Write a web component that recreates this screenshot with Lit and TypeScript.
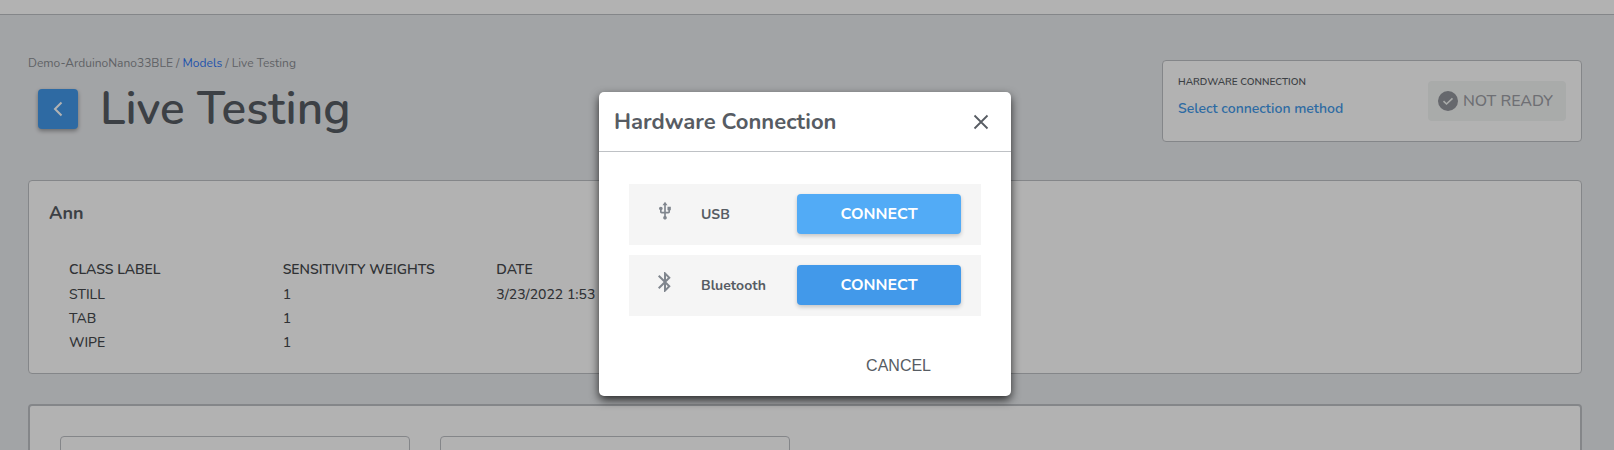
import { LitElement, html, css, svg } from "lit";
import { customElement } from "lit/decorators.js";

const usbIcon = svg`<path d="M15 7v4h1v2h-3V5h2l-3-4-3 4h2v8H8v-2.070c.7-.37 1.200-1.080 1.200-1.930 0-1.210-.99-2.200-2.200-2.200S4.800 7.790 4.800 9c0 .85.5 1.560 1.200 1.930V13c0 1.110.89 2 2 2h3v3.050c-.71.370-1.200 1.100-1.200 1.950 0 1.220.99 2.200 2.200 2.200s2.200-.98 2.200-2.200c0-.85-.49-1.580-1.200-1.950V15h3c1.110 0 2-.89 2-2v-2h1V7h-4z"/>`;
const bluetoothIcon = svg`<path d="M17.710 7.710 12 2h-1v7.590L6.410 5 5 6.410 10.590 12 5 17.590 6.410 19 11 14.410V22h1l5.710-5.710-4.300-4.290 4.300-4.290zM13 5.830l1.880 1.880L13 9.590V5.830zm1.880 10.460L13 18.170v-3.760l1.880 1.880z"/>`;

@customElement("app-root")
export class AppRoot extends LitElement {
  static styles = css`
    :host {
      display: block;
      position: relative;
      height: 100vh;
      overflow: hidden;
      background: #e9ebee;
      color: #575c63;
      font-family: "Nunito", "Lato", sans-serif;
      font-size: 14px;
      line-height: 20px;
    }
    * { box-sizing: border-box; }
    h1, h2, h3, p { margin: 0; }
    a { text-decoration: none; }
    button { font: inherit; border: 0; margin: 0; padding: 0; cursor: pointer; }
    .topbar { height: 15px; background: #fff; border-bottom: 1px solid #bec1c5; }
    .page { padding: 37px 32px 0 28px; }
    .head { display: flex; justify-content: space-between; align-items: flex-start; height: 128px; }
    .crumbs { font-size: 12px; line-height: 22px; color: #8a8d92; }
    .crumbs a { color: #2f76f6; }
    .title-row { display: flex; align-items: center; gap: 22px; padding-left: 10px; height: 70px; }
    .back {
      display: grid; place-items: center; width: 40px; height: 40px; border-radius: 4px;
      background: #4299ea; color: #fff; box-shadow: 0 2px 4px rgba(0, 0, 0, 0.35);
    }
    h1 { font-size: 46px; line-height: 60px; font-weight: 600; }
    .card { background: #fff; border: 1px solid #bec1c5; border-radius: 4px; }
    .hardware {
      display: flex; justify-content: space-between; align-items: flex-start;
      width: 420px; height: 82px; margin-top: 8px; padding: 10px 15px;
    }
    .caption { font-size: 10px; line-height: 22px; font-weight: 600; }
    .method { display: block; font-size: 14px; line-height: 32px; font-weight: 600; color: #4299ea; }
    .status {
      display: flex; align-items: center; gap: 5px;
      width: 138px; height: 40px; margin-top: 10px; padding-left: 10px; border-radius: 4px;
      background: #f3f5f4; color: #9ea0a6; font-size: 16px; font-weight: 500;
    }
    .model { min-height: 194px; padding: 20px 20px 15px; }
    h2 { font-size: 18px; line-height: 24px; font-weight: 700; }
    .classes { margin: 32px 0 0 20px; border-collapse: collapse; color: #45484c; width: 641px; max-width: 100%; table-layout: fixed; }
    .classes th, .classes td { padding: 0; height: 24px; text-align: left; font-weight: 500; white-space: nowrap; }
    .classes th { height: 26px; font-weight: 600; }
    .panels { display: flex; gap: 30px; margin-top: 30px; padding: 30px; border-width: 2px; }
    .panel { width: 350px; height: 240px; }
    .overlay {
      position: absolute; inset: 0; display: flex; justify-content: center; align-items: flex-start;
      padding: 92px 4px 0 0; background: rgba(0, 0, 0, 0.3);
    }
    .dialog {
      width: 412px; border-radius: 5px; background: #fff;
      box-shadow: 0 4px 10px rgba(0, 0, 0, 0.75);
    }
    .dialog-head {
      display: flex; align-items: center; justify-content: space-between;
      height: 60px; padding: 0 18px 0 15px; border-bottom: 1px solid #bec1c5;
    }
    h3 { font-size: 22px; line-height: 30px; font-weight: 700; }
    .close { display: grid; place-items: center; width: 24px; height: 24px; background: none; color: #575c63; }
    .options { display: grid; gap: 10px; padding: 32px 30px 0; }
    .option {
      display: grid; grid-template-columns: 72px 1fr 164px; align-items: center;
      height: 61px; padding: 0 20px 1px 0; background: #f5f5f5;
    }
    .icon { display: grid; place-items: center; padding-bottom: 6px; fill: #80868e; }
    .name { font-weight: 700; padding-top: 2px; }
    .connect {
      height: 40px; border-radius: 4px; background: #4299ea; color: #fff;
      font-size: 16px; font-weight: 700; box-shadow: 0 2px 4px rgba(0, 0, 0, 0.2);
    }
    .connect.lit { background: #52abf6; }
    .actions { display: flex; justify-content: flex-end; padding: 30px 60px 10px; }
    .cancel {
      height: 40px; padding: 0 20px; background: none; color: #575c63;
      font-family: "Liberation Sans", Arial, sans-serif; font-size: 16px;
    }
    svg { display: block; }
  `;

  private classes = ["STILL", "TAB", "WIPE"];

  private option(name: string, icon: unknown, size: number, lit: boolean) {
    return html`
      <div class="option">
        <span class="icon">
          <svg width=${size} height=${size} viewBox="0 0 24 24" aria-hidden="true">${icon}</svg>
        </span>
        <span class="name">${name}</span>
        <button class="connect ${lit ? "lit" : ""}" aria-label="Connect ${name}">CONNECT</button>
      </div>`;
  }

  render() {
    return html`
      <div class="topbar"></div>
      <main class="page">
        <header class="head">
          <div>
            <nav class="crumbs">Demo-ArduinoNano33BLE / <a href="#models">Models</a> / Live Testing</nav>
            <div class="title-row">
              <button class="back" aria-label="Back">
                <svg width="24" height="24" viewBox="0 0 24 24" fill="none" stroke="currentColor" stroke-width="2"><path d="M15.500 5.500 9 12l6.500 6.500"/></svg>
              </button>
              <h1>Live Testing</h1>
            </div>
          </div>
          <section class="card hardware">
            <div>
              <p class="caption">HARDWARE CONNECTION</p>
              <a class="method" href="#connection">Select connection method</a>
            </div>
            <div class="status">
              <svg width="20" height="20" viewBox="0 0 20 20" fill="none">
                <circle cx="10" cy="10" r="10" fill="#92959c"/>
                <path d="m5.500 10.200 3 2.800 6-5.700" stroke="#f3f5f4" stroke-width="1.600"/>
              </svg>
              <span>NOT READY</span>
            </div>
          </section>
        </header>
        <section class="card model">
          <h2>Ann</h2>
          <table class="classes">
            <thead><tr><th>CLASS LABEL</th><th>SENSITIVITY WEIGHTS</th><th>DATE</th></tr></thead>
            <tbody>
              ${this.classes.map((name, i) => html`<tr><td>${name}</td><td>1</td><td>${i === 0 ? "3/23/2022 1:53" : ""}</td></tr>`)}
            </tbody>
          </table>
        </section>
        <section class="card panels">
          <div class="card panel"></div>
          <div class="card panel"></div>
        </section>
      </main>
      <div class="overlay">
        <div class="dialog" role="dialog" aria-modal="true" aria-labelledby="dialog-title">
          <div class="dialog-head">
            <h3 id="dialog-title">Hardware Connection</h3>
            <button class="close" aria-label="Close">
              <svg width="24" height="24" viewBox="0 0 24 24" fill="none" stroke="currentColor" stroke-width="1.800"><path d="m5.500 5.500 13 13m0-13-13 13"/></svg>
            </button>
          </div>
          <div class="options">
            ${this.option("USB", usbIcon, 20, true)}
            ${this.option("Bluetooth", bluetoothIcon, 24, false)}
          </div>
          <div class="actions"><button class="cancel">CANCEL</button></div>
        </div>
      </div>`;
  }
}
